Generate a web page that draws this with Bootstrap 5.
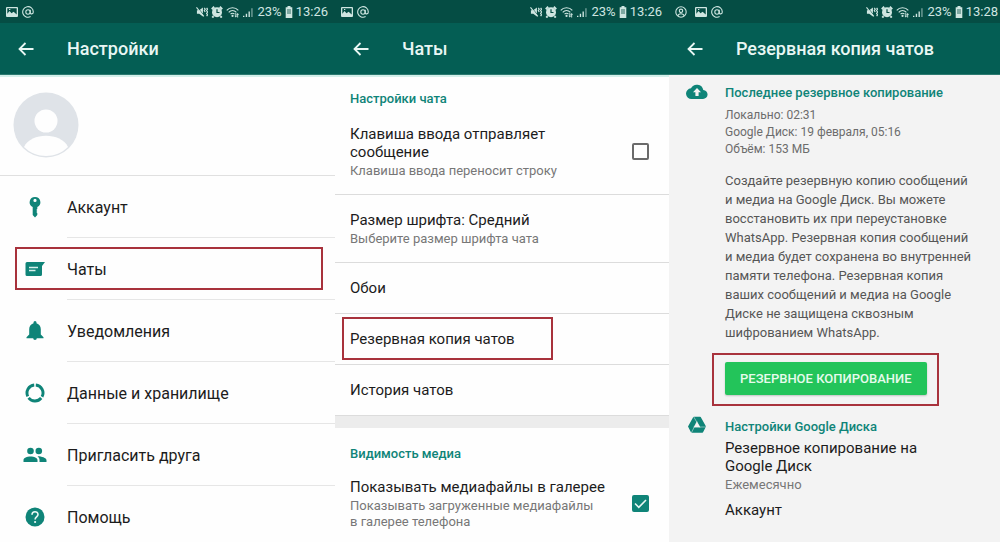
<!DOCTYPE html>
<html lang="ru">
<head>
<meta charset="utf-8">
<meta name="viewport" content="width=device-width, initial-scale=1">
<title>Резервная копия чатов</title>
<link href="https://cdn.jsdelivr.net/npm/bootstrap@5.3.0/dist/css/bootstrap.min.css" rel="stylesheet">
<style>
  :root { --teal: #0f8478; --bar: #045e54; --status: #054d44; --mark: #a8323c; }
  body { font-family: Roboto, "Noto Sans", sans-serif; font-size: 16px; line-height: 18px; color: #1c1c1c; background: #fefefe; }
  a { color: inherit; text-decoration: none; }
  .screens { display: grid; grid-template-columns: 335fr 334fr 331fr; }
  .statusbar { height: 23px; background: var(--status); color: #cfe6e1; font-size: 13px; padding: 0 7px 0 6px; }
  .backup .statusbar { padding-right: 2px; }
  .status-icons { gap: 3px; }
  .statusbar svg, .appbar svg { display: block; }
  .appbar { height: 52px; background: var(--bar); color: #e9f7f4; border-bottom: 1px solid #2b7a70; padding: 0 18px; gap: 33px; }
  .appbar h1 { font-size: 18px; line-height: 24px; font-weight: 500; margin: 0; }
  .appbar button { color: inherit; line-height: 0; }
  .panel-edge { border-top: 2px solid #d3efea; }
  .profile { height: 101px; padding-left: 13px; padding-bottom: 2px; border-bottom: 1px solid #e0e0e0; }
  .menu-row { height: 62px; }
  .menu-icon { width: 67px; color: var(--teal); padding-left: 2px; }
  .menu-label { border-bottom: 1px solid #e6e6e6; padding-top: 2px; }
  .marker { position: absolute; border: 2px solid var(--mark); pointer-events: none; }
  .marker-row { inset: 9px 12px 10px 15px; }
  .marker-text { inset: -13px -38px -12px -8px; }
  .marker-button { inset: -9px -12px -11px -13px; }
  .section-title { font-size: 13px; line-height: 16px; font-weight: 500; color: var(--teal); margin: 0; }
  .options .section-title { padding: 14px 15px 2px; }
  .options .divider + .section-title { padding-top: 18px; padding-bottom: 0; }
  .options { font-size: 15px; }
  .option { padding: 16px 20px 15px 15px; border-bottom: 1px solid #dcdcdc; }
  .option-single { height: 51px; }
  .hint { font-size: 13px; line-height: 16px; color: #777; margin-top: 2px; }
  .form-check-input { width: 17px; height: 17px; border: 2px solid #6b6b6b; margin: 0 0 2px 12px; }
  .form-check-input[type=checkbox] { border-radius: 2px; }
  .form-check-input:checked { background-color: var(--teal); border-color: var(--teal); }
  .form-check-input:checked[type=checkbox] { background-image: url("data:image/svg+xml,%3csvg xmlns='http://www.w3.org/2000/svg' viewBox='0 0 13 13'%3e%3cpath d='M1 6.500l3.800 3.800L12 3' fill='none' stroke='%23e9f7f4' stroke-width='1.600'/%3e%3c/svg%3e"); }
  .divider { height: 12px; background: #ececec; }
  .backup { background: #f3f3f3; }
  .backup-icon { width: 56px; color: var(--teal); line-height: 0; }
  .backup-text { padding: 2px 25px 0 0; }
  .info { font-size: 12px; line-height: 17px; color: #6c6c6c; margin: 6px 0 13px; }
  .about { font-size: 13px; line-height: 19px; color: #565656; }
  .drive-options { font-size: 15px; }
  .btn-backup { background: #23c45a; color: #e6fbec; font-size: 13px; line-height: 19px; font-weight: 500; padding: 7px 15px; border: 0; border-radius: 2px; box-shadow: 0 1px 2px #0003; }
</style>
</head>
<body>

<svg class="d-none">
  <symbol id="i-photo" viewBox="0 0 12 12"><path fill-rule="evenodd" fill="currentColor" d="M1 1h10a1 1 0 0 1 1 1v8a1 1 0 0 1-1 1H1a1 1 0 0 1-1-1V2a1 1 0 0 1 1-1zm.3 1.200v5.600L3.500 5l2 2.200L7.600 5.800l3.100 2.800V2.200zM3 3h1.300v1H3z"/></symbol>
  <symbol id="i-at" viewBox="0 0 12 12"><g fill="none" stroke="currentColor" stroke-width="1.100"><circle cx="6" cy="6" r="2.200"/><path d="M8.200 3.800v3c0 1.600 3.100 1.500 3.100-.8A5.300 5.300 0 1 0 8.600 10.600"/></g></symbol>
  <symbol id="i-user" viewBox="0 0 12 12"><g fill="none" stroke="currentColor" stroke-width="1.100"><circle cx="6" cy="6" r="5.200"/><circle cx="6" cy="4.800" r="1.700"/><path d="M2.800 9.800C3.500 7 8.500 7 9.200 9.800"/></g></symbol>
  <symbol id="i-mute" viewBox="0 0 13 12"><path fill="currentColor" d="M1 4h2.500L7.500 1v10L3.500 8H1z"/><path d="M1 .5l8 9.500" stroke="#054d44" stroke-width="1"/><path d="M.5 1L8.500 10.800" stroke="currentColor" stroke-width="1.200"/><path fill="none" stroke="currentColor" stroke-width="1.300" d="M9 1.500l1 1.500-1 1.500L10 6M11.500 1.500l1 1.500-1 1.500 1 1.500-1 1.500 1 1.500-1 1.500"/></symbol>
  <symbol id="i-alarm" viewBox="0 0 12 12"><circle cx="6" cy="6.200" r="5" fill="currentColor"/><path d="M.8 3.200L3.200.8M11.200 3.200L8.800.8M2.500 10.200L1.300 11.600M9.500 10.200l1.200 1.400" stroke="currentColor" stroke-width="2"/><path d="M6 3.300v3.200h2.500" fill="none" stroke="#054d44" stroke-width="1.200"/></symbol>
  <symbol id="i-wifi" viewBox="0 0 15 12"><g fill="none" stroke="currentColor" stroke-width="1.200"><path d="M.8 4.200C4 .6 10 .6 13.200 4.200M2.900 6.300c2.400-2.600 5.800-2.600 8.200 0M4.900 8.400c1.300-1.400 2.900-1.400 4.200 0"/></g><circle cx="7" cy="10.200" r="1.200" fill="currentColor"/><path fill="currentColor" d="M10 7h1v3l1 0-1.500 2L9 10h1zM13 12h-1V9h-1l1.500-2L14 9h-1z"/></symbol>
  <symbol id="i-signal" viewBox="0 0 12 12"><path fill="currentColor" d="M0 10h1.500v1.500H0zM3 8h1.500v3.500H3zM6 5.500h1.500v6H6z"/><path fill="currentColor" opacity=".55" d="M9 2h1.500v9.500H9z"/></symbol>
  <symbol id="i-battery" viewBox="0 0 8 12"><path fill="currentColor" d="M2.500 0h3v1.200H7.300V12H.7V1.200h1.800z"/><path fill="#054d44" opacity=".4" d="M2 3h4v5H2z"/></symbol>
  <symbol id="i-back" viewBox="0 0 16 14"><path d="M15.500 7H1.500M7.500 1l-6 6 6 6" fill="none" stroke="currentColor" stroke-width="1.800"/></symbol>
</svg>

<main class="screens vh-100 overflow-hidden">

  <section>
    <div class="statusbar d-flex align-items-center justify-content-between">
      <div class="d-flex gap-1">
        <svg width="12" height="12"><use href="#i-photo"/></svg>
        <svg width="12" height="12"><use href="#i-at"/></svg>
      </div>
      <div class="status-icons d-flex align-items-center">
        <svg width="12" height="12"><use href="#i-mute"/></svg>
        <svg width="12" height="12"><use href="#i-alarm"/></svg>
        <svg width="14" height="12"><use href="#i-wifi"/></svg>
        <svg width="11" height="12"><use href="#i-signal"/></svg>
        <span>23%</span>
        <svg width="8" height="12"><use href="#i-battery"/></svg>
        <span>13:26</span>
      </div>
    </div>
    <header class="appbar d-flex align-items-center">
      <button class="btn p-0 border-0" aria-label="Назад"><svg width="16" height="14"><use href="#i-back"/></svg></button>
      <h1>Настройки</h1>
    </header>
    <div class="profile panel-edge d-flex align-items-center">
      <svg width="66" height="66" viewBox="0 0 66 66" aria-hidden="true">
        <circle cx="33" cy="33" r="32.500" fill="#dfe3e8"/>
        <circle cx="33" cy="29" r="11.500" fill="#fefefe"/>
        <path d="M11 55C18 40 48 40 55 55C43 67 23 67 11 55z" fill="#fefefe"/>
      </svg>
    </div>
    <nav>
      <a class="menu-row d-flex" href="#account">
        <span class="menu-icon d-flex align-items-center justify-content-center"><svg width="20" height="22" viewBox="0 0 20 22"><path fill="currentColor" fill-rule="evenodd" d="M10 1a5.300 5.300 0 0 1 2.300 10.100V13l-1 1 1 1-1 1 1 1v2L10 21.500 7.700 19v-7.900A5.300 5.300 0 0 1 10 1zm0 1.800a1.600 1.600 0 1 0 0 3.200 1.600 1.600 0 0 0 0-3.200z"/></svg></span>
        <span class="menu-label flex-grow-1 d-flex align-items-center">Аккаунт</span>
      </a>
      <a class="menu-row d-flex position-relative" href="#chats">
        <span class="menu-icon d-flex align-items-center justify-content-center"><svg width="20" height="16" viewBox="0 0 20 16"><path fill="currentColor" d="M2 1h18l-3 4v8.500a1.500 1.500 0 0 1-1.500 1.500H2A1.500 1.500 0 0 1 .5 13.500v-11A1.500 1.500 0 0 1 2 1z"/><path d="M4 6.500h9M4 9.500h6.500" stroke="#d8f0ec" stroke-width="1.400"/></svg></span>
        <span class="menu-label flex-grow-1 d-flex align-items-center">Чаты</span>
        <span class="marker marker-row"></span>
      </a>
      <a class="menu-row d-flex" href="#notifications">
        <span class="menu-icon d-flex align-items-center justify-content-center"><svg width="18" height="20" viewBox="0 0 18 20"><path fill="currentColor" d="M9 0a1.500 1.500 0 0 1 1.500 1.500v.7C13.300 3 14.800 5.400 14.800 8.200V13.500L17.500 16.300v1H.5v-1L3.200 13.500V8.200c0-2.800 1.500-5.200 4.300-6v-.7A1.500 1.500 0 0 1 9 0zM7.200 17.300h3.600a1.800 1.800 0 0 1-3.600 0z"/></svg></span>
        <span class="menu-label flex-grow-1 d-flex align-items-center">Уведомления</span>
      </a>
      <a class="menu-row d-flex" href="#data">
        <span class="menu-icon d-flex align-items-center justify-content-center"><svg width="20" height="20" viewBox="0 0 20 20"><g fill="none" stroke="currentColor" stroke-width="2.900"><path d="M10.800 2A8 8 0 0 1 17 13.800"/><path d="M16.200 15A8 8 0 0 1 3.600 14.800"/><path d="M2.800 13.400A8 8 0 0 1 9.200 2"/></g></svg></span>
        <span class="menu-label flex-grow-1 d-flex align-items-center">Данные и хранилище</span>
      </a>
      <a class="menu-row d-flex" href="#invite">
        <span class="menu-icon d-flex align-items-center justify-content-center"><svg width="24" height="16" viewBox="0 0 24 16"><g fill="currentColor"><circle cx="7.500" cy="4" r="3.300"/><circle cx="15.800" cy="4" r="3.300"/><path d="M.5 15v-2c0-4.800 14-4.800 14 0v2zM14.500 9.300c4 .1 9 1.500 9 4V15h-7v-2c0-1.500-.8-2.800-2-3.700z"/></g></svg></span>
        <span class="menu-label flex-grow-1 d-flex align-items-center">Пригласить друга</span>
      </a>
      <a class="menu-row d-flex" href="#help">
        <span class="menu-icon d-flex align-items-center justify-content-center"><svg width="20" height="20" viewBox="0 0 20 20"><circle cx="10" cy="10" r="9.500" fill="currentColor"/><path d="M7 7.800C7 3.600 13 3.800 13 7.500c0 2.300-2.900 2.600-2.900 5" fill="none" stroke="#e9f7f4" stroke-width="1.600"/><circle cx="10.100" cy="15" r="1.100" fill="#e9f7f4"/></svg></span>
        <span class="menu-label flex-grow-1 d-flex align-items-center">Помощь</span>
      </a>
    </nav>
  </section>

  <section>
    <div class="statusbar d-flex align-items-center justify-content-between">
      <div class="d-flex gap-1">
        <svg width="12" height="12"><use href="#i-photo"/></svg>
        <svg width="12" height="12"><use href="#i-at"/></svg>
      </div>
      <div class="status-icons d-flex align-items-center">
        <svg width="12" height="12"><use href="#i-mute"/></svg>
        <svg width="12" height="12"><use href="#i-alarm"/></svg>
        <svg width="14" height="12"><use href="#i-wifi"/></svg>
        <svg width="11" height="12"><use href="#i-signal"/></svg>
        <span>23%</span>
        <svg width="8" height="12"><use href="#i-battery"/></svg>
        <span>13:26</span>
      </div>
    </div>
    <header class="appbar d-flex align-items-center">
      <button class="btn p-0 border-0" aria-label="Назад"><svg width="16" height="14"><use href="#i-back"/></svg></button>
      <h1>Чаты</h1>
    </header>
    <div class="options panel-edge">
      <h2 class="section-title">Настройки чата</h2>
      <div class="option d-flex align-items-center justify-content-between">
        <label for="enter">Клавиша ввода отправляет сообщение<span class="hint d-block">Клавиша ввода переносит строку</span></label>
        <input class="form-check-input flex-shrink-0" type="checkbox" id="enter">
      </div>
      <a class="option d-block" href="#font">Размер шрифта: Средний<span class="hint d-block">Выберите размер шрифта чата</span></a>
      <a class="option option-single d-block" href="#wallpaper">Обои</a>
      <a class="option option-single d-block" href="#backup"><span class="position-relative">Резервная копия чатов<span class="marker marker-text"></span></span></a>
      <a class="option option-single d-block" href="#history">История чатов</a>
      <div class="divider"></div>
      <h2 class="section-title">Видимость медиа</h2>
      <div class="option d-flex align-items-center justify-content-between">
        <label for="gallery">Показывать медиафайлы в галерее<span class="hint d-block">Показывать загруженные медиафайлы в&nbsp;галерее телефона</span></label>
        <input class="form-check-input flex-shrink-0" type="checkbox" id="gallery" checked>
      </div>
    </div>
  </section>

  <section class="backup">
    <div class="statusbar d-flex align-items-center justify-content-between">
      <div class="d-flex gap-1">
        <svg width="12" height="12"><use href="#i-user"/></svg>
        <svg class="ms-1" width="12" height="12"><use href="#i-photo"/></svg>
        <svg width="12" height="12"><use href="#i-at"/></svg>
      </div>
      <div class="status-icons d-flex align-items-center">
        <svg width="12" height="12"><use href="#i-mute"/></svg>
        <svg width="12" height="12"><use href="#i-alarm"/></svg>
        <svg width="14" height="12"><use href="#i-wifi"/></svg>
        <svg width="11" height="12"><use href="#i-signal"/></svg>
        <span>23%</span>
        <svg width="8" height="12"><use href="#i-battery"/></svg>
        <span>13:28</span>
      </div>
    </div>
    <header class="appbar d-flex align-items-center">
      <button class="btn p-0 border-0" aria-label="Назад"><svg width="16" height="14"><use href="#i-back"/></svg></button>
      <h1>Резервная копия чатов</h1>
    </header>
    <div class="d-flex pt-2">
      <div class="backup-icon flex-shrink-0 text-center"><svg width="22" height="18" viewBox="0 0 22 18"><path fill="currentColor" d="M17.300 7A6.600 6.600 0 0 0 5 5.300 5.300 5.300 0 0 0 5.800 16H16.800a4.500 4.500 0 0 0 .5-9z"/><path fill="#f3f3f3" d="M11 5l4 4.200h-2.400V13H9.400V9.200H7z"/></svg></div>
      <div class="backup-text flex-grow-1">
        <h2 class="section-title">Последнее резервное копирование</h2>
        <p class="info">Локально: 02:31<br>Google Диск: 19 февраля, 05:16<br>Объём: 153 МБ</p>
        <p class="about mb-3">Создайте резервную копию сообщений и медиа на Google Диск. Вы можете восстановить их при переустановке WhatsApp. Резервная копия сообщений и медиа будет сохранена во внутренней памяти телефона. Резервная копия ваших сообщений и медиа на Google Диске не защищена сквозным шифрованием WhatsApp.</p>
        <div class="position-relative d-inline-block mt-1">
          <button class="btn btn-backup d-block text-nowrap">РЕЗЕРВНОЕ КОПИРОВАНИЕ</button>
          <span class="marker marker-button"></span>
        </div>
      </div>
    </div>
    <div class="d-flex pt-3">
      <div class="backup-icon flex-shrink-0 text-center pt-1"><svg width="20" height="20" viewBox="0 0 20 20"><path fill="currentColor" stroke="currentColor" stroke-width="1.500" stroke-linejoin="round" d="M6.800 2.500h6.400l5 9-2.800 5.500H4.600l-2.800-5.500z"/><path d="M10 6.500l3.200 5.700H6.800z" fill="#f3f3f3"/><path d="M6.500 1.500l6.500 11M19 12H6.500M4.300 18L10 6.500" fill="none" stroke="#f3f3f3" stroke-width=".5"/></svg></div>
      <div class="drive-options flex-grow-1 pe-5">
        <h2 class="section-title pt-2 mb-1">Настройки Google Диска</h2>
        <a class="d-block" href="#frequency">Резервное копирование на Google Диск<span class="hint d-block">Ежемесячно</span></a>
        <a class="d-block mt-2" href="#google">Аккаунт</a>
      </div>
    </div>
  </section>
</main>

<script src="https://cdn.jsdelivr.net/npm/bootstrap@5.3.0/dist/js/bootstrap.bundle.min.js"></script>
</body>
</html>
